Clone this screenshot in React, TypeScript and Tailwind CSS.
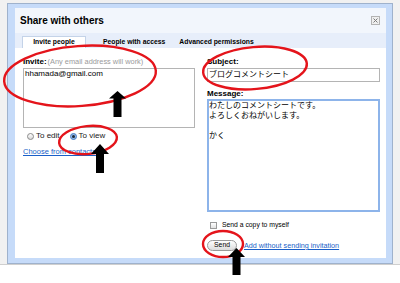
import React from "react";

function Radio({ checked }: { checked?: boolean }) {
  return checked ? (
    <span className="flex h-[7px] w-[7px] items-center justify-center rounded-full border border-[#4a7fc4] bg-[#8fb8ec]">
      <span className="block h-[3px] w-[3px] rounded-full bg-[#1d2a3a]" />
    </span>
  ) : (
    <span className="block h-[7px] w-[7px] rounded-full border border-[#8a8a8a] bg-[linear-gradient(#ffffff,#d8d8d8)]" />
  );
}

function Annotations() {
  return (
    <svg className="pointer-events-none absolute inset-0" width="400" height="283" viewBox="0 0 400 283">
      <g fill="none" stroke="#e4141b" strokeWidth="2.4">
        <ellipse cx="80" cy="76" rx="76" ry="30" transform="rotate(-4 80 76)" />
        <ellipse cx="255" cy="68" rx="52" ry="21" transform="rotate(-5 255 68)" />
        <ellipse cx="88" cy="140" rx="29" ry="14" transform="rotate(-6 88 140)" />
        <ellipse cx="223" cy="244" rx="20" ry="13" />
      </g>
      <g fill="#000">
        <polygon points="117.5,91 126,98.5 121.5,98.5 121.5,117 113.5,117 113.5,98.5 109,98.5" />
        <polygon points="100,144 109,154 104,154 104,173 96,173 96,154 91,154" />
        <polygon points="236.5,248 245,257 240.5,257 240.5,275 232.5,275 232.5,257 228,257" />
      </g>
    </svg>
  );
}

export default function App() {
  return (
    <div className="relative h-[283px] w-[400px] overflow-hidden bg-white font-['Liberation_Sans','Noto_Sans_CJK_JP',sans-serif] text-[#000]">
      <div className="h-[265px] border-b border-[#cfcfcf] bg-[#f1f1f1] pl-[7px] pt-[3px]">
        <div className="h-[261px] w-[386px] border border-[#9fb2cc] bg-[#c6dbf9] pb-[5px] pl-[7px] pr-[6px] pt-[4px]">
          <div className="flex h-full w-full flex-col bg-white">
            {/* title */}
            <div className="flex h-[25px] items-center justify-between bg-[#f2f6fc] pl-[5px] pr-[6px]">
              <span className="text-[10px] font-bold leading-none">Share with others</span>
              <span className="flex h-[9px] w-[9px] items-center justify-center border border-[#b3b3b3] bg-[#efefef]">
                <svg width="5" height="5" viewBox="0 0 5 5">
                  <path d="M0.5 0.5L4.5 4.5M4.5 0.5L0.5 4.5" stroke="#7a7a7a" strokeWidth="1" />
                </svg>
              </span>
            </div>

            {/* tabs */}
            <div className="flex h-[15px] items-end bg-[#e7eefa] pl-[7px] text-[6.8px] font-bold leading-none">
              <div className="flex h-[12px] w-[64px] items-center justify-center border-x border-t border-[#c4d3e8] bg-white">
                Invite people
              </div>
              <div className="ml-[17px] flex h-[12px] items-center">People with access</div>
              <div className="ml-[14px] flex h-[12px] items-center">Advanced permissions</div>
            </div>

            {/* body */}
            <div className="flex gap-[12px] pl-[8px] pt-[9px]">
              <div className="flex w-[172px] flex-col">
                <div className="flex h-[10px] items-center gap-[1px] leading-none">
                  <span className="text-[8px] font-bold">Invite:</span>
                  <span className="text-[7.4px] text-[#9a9a9a]">(Any email address will work)</span>
                </div>
                <div className="mt-[1px] h-[60px] border border-[#b4b4b4] px-[1px] text-[8px] leading-[10px]">
                  hhamada@gmail.com
                </div>
                <div className="mt-[3px] flex h-[10px] items-center text-[8px] leading-none text-[#222]">
                  <span className="ml-[4px]">
                    <Radio />
                  </span>
                  <span className="ml-[2px]">To edit</span>
                  <span className="ml-[10px]">
                    <Radio checked />
                  </span>
                  <span className="ml-[2px]">To view</span>
                </div>
                <div className="mt-[6px] h-[10px] text-[7.5px] leading-[10px] text-[#1a5fc8] underline">
                  Choose from contacts
                </div>
              </div>

              <div className="flex w-[173px] flex-col">
                <div className="h-[10px] text-[8px] font-bold leading-[10px]">Subject:</div>
                <div className="mt-[1px] flex h-[14px] items-center border border-[#b4b4b4] px-[1px] text-[8px] leading-none">
                  ブログコメントシート
                </div>
                <div className="mt-[7px] h-[10px] text-[8px] font-bold leading-[10px]">Message:</div>
                <div className="h-[113px] border-2 border-[#8db4ea] px-[0px] text-[8px] leading-[10px]">
                  <div>わたしのコメントシートです。</div>
                  <div>よろしくおねがいします。</div>
                  <div className="h-[10px]" />
                  <div>かく</div>
                </div>
                <div className="mt-[8px] flex h-[10px] items-center text-[6.8px] leading-none">
                  <span className="ml-[3px] h-[7px] w-[7px] border border-[#9a9a9a] bg-[linear-gradient(#ffffff,#e2e2e2)]" />
                  <span className="ml-[5px]">Send a copy to myself</span>
                </div>
                <div className="mt-[10px] flex h-[11px] items-center">
                  <span className="flex h-[11px] w-[30px] items-center justify-center rounded-full border border-[#9a9a9a] bg-[linear-gradient(#ffffff,#dcdcdc)] text-[6.8px] leading-none">
                    Send
                  </span>
                  <span className="ml-[7px] text-[7.2px] leading-none text-[#1a5fc8] underline">
                    Add without sending invitation
                  </span>
                </div>
              </div>
            </div>
          </div>
        </div>
      </div>
      <Annotations />
    </div>
  );
}
